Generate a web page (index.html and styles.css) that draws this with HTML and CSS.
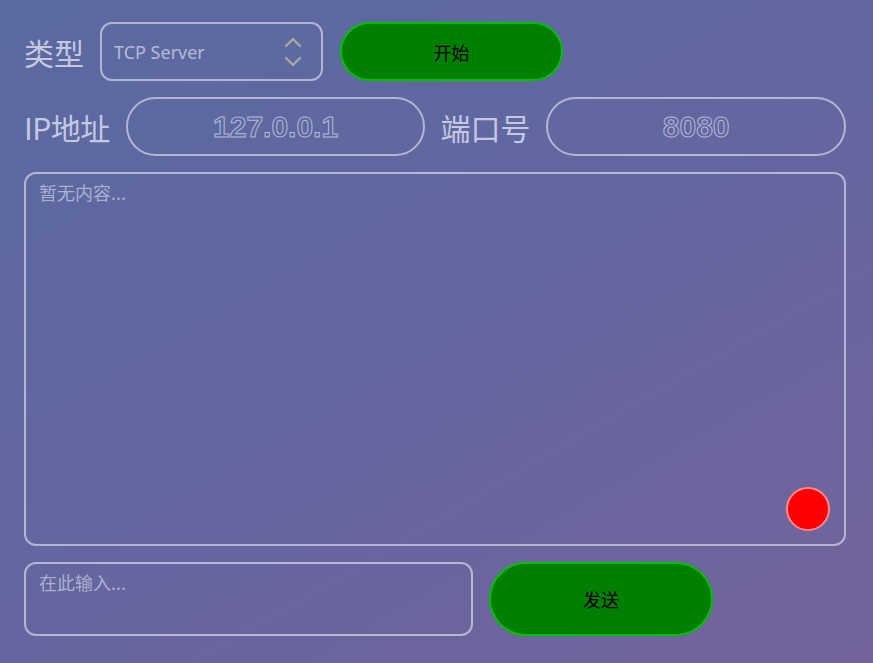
FILE: index.html
```html
<!DOCTYPE html>
<html lang="zh">
<head>
<meta charset="utf-8">
<title>TCP</title>
<link rel="stylesheet" href="styles.css">
</head>
<body>
<div class="app">
  <div class="row row-type">
    <span class="label">类型</span>
    <div class="select">
      <span class="select-text">TCP Server</span>
      <svg class="chev" width="20" height="32" viewBox="0 0 20 32">
        <path d="M3 10 L10 3 L17 10" fill="none" stroke="#a9a99e" stroke-width="2.4" stroke-linecap="round" stroke-linejoin="round"/>
        <path d="M3 22 L10 29 L17 22" fill="none" stroke="#a9a99e" stroke-width="2.4" stroke-linecap="round" stroke-linejoin="round"/>
      </svg>
    </div>
    <button class="btn btn-start">开始</button>
  </div>
  <div class="row row-addr">
    <span class="label">IP地址</span>
    <div class="pill-input"><span class="outline-text">127.0.0.1</span></div>
    <span class="label">端口号</span>
    <div class="pill-input"><span class="outline-text">8080</span></div>
  </div>
  <div class="log">
    <span class="placeholder">暂无内容...</span>
    <span class="dot"></span>
  </div>
  <div class="row row-send">
    <div class="msg"><span class="placeholder">在此输入...</span></div>
    <button class="btn btn-send">发送</button>
  </div>
</div>
</body>
</html>
```
FILE: styles.css
```css
html, body {
  margin: 0;
  padding: 0;
  height: 100%;
}
body {
  background: linear-gradient(150deg, #5a6aa0 0%, #6466a0 50%, #74639b 100%);
  font-family: "Noto Sans", "Noto Sans CJK SC", sans-serif;
  overflow: hidden;
}
.app {
  padding: 22px 27px 0 24px;
  display: flex;
  flex-direction: column;
  gap: 16px;
}
.row {
  display: flex;
  align-items: center;
}
.row-type {
  gap: 16px;
  height: 59px;
}
.row-type .btn-start {
  margin-left: 1px;
}
.row-addr {
  gap: 16px;
  height: 59px;
}
.label {
  font-family: "Noto Sans CJK SC", sans-serif;
  font-size: 30px;
  color: #c4c8e2;
  line-height: 1;
  white-space: nowrap;
}
.row-addr .label:first-child {
  letter-spacing: -0.5px;
}
.row-addr .label:nth-child(3) {
  margin-left: -1px;
}
.select {
  box-sizing: border-box;
  width: 223px;
  height: 59px;
  border: 2px solid rgba(205, 208, 232, 0.75);
  border-radius: 12px;
  display: flex;
  align-items: center;
  justify-content: space-between;
  padding: 0 18px 0 12px;
}
.select-text {
  font-size: 18px;
  color: #b6bad8;
}
.chev {
  display: block;
}
.btn {
  box-sizing: border-box;
  width: 223px;
  height: 59px;
  border-radius: 30px;
  background: #007f00;
  border: 2px solid #00c000;
  color: #000;
  font-family: "Noto Sans CJK SC", sans-serif;
  font-size: 18px;
  padding: 0;
}
.pill-input {
  box-sizing: border-box;
  width: 300px;
  height: 59px;
  border: 2px solid rgba(205, 208, 232, 0.75);
  border-radius: 30px;
  display: flex;
  align-items: center;
  justify-content: center;
}
.outline-text {
  font-family: "Liberation Sans", sans-serif;
  font-weight: bold;
  font-size: 30px;
  color: transparent;
  -webkit-text-stroke: 1px #b4b8da;
  line-height: 1;
}
.log {
  position: relative;
  box-sizing: border-box;
  height: 374px;
  border: 2px solid rgba(205, 208, 232, 0.75);
  border-radius: 12px;
  padding: 6px 13px;
}
.placeholder {
  font-family: "Noto Sans CJK SC", sans-serif;
  font-size: 18px;
  color: #abb0d2;
  line-height: 24px;
}
.dot {
  position: absolute;
  right: 14px;
  bottom: 13px;
  width: 44px;
  height: 44px;
  box-sizing: border-box;
  border-radius: 50%;
  background: #ff0000;
  border: 2px solid #ff8a8a;
}
.row-send {
  gap: 16px;
  align-items: stretch;
  height: 74px;
}
.msg {
  box-sizing: border-box;
  width: 449px;
  height: 74px;
  border: 2px solid rgba(205, 208, 232, 0.75);
  border-radius: 12px;
  padding: 6px 13px;
}
.btn-send {
  width: 224px;
  height: 74px;
  border-radius: 37px;
}
```
